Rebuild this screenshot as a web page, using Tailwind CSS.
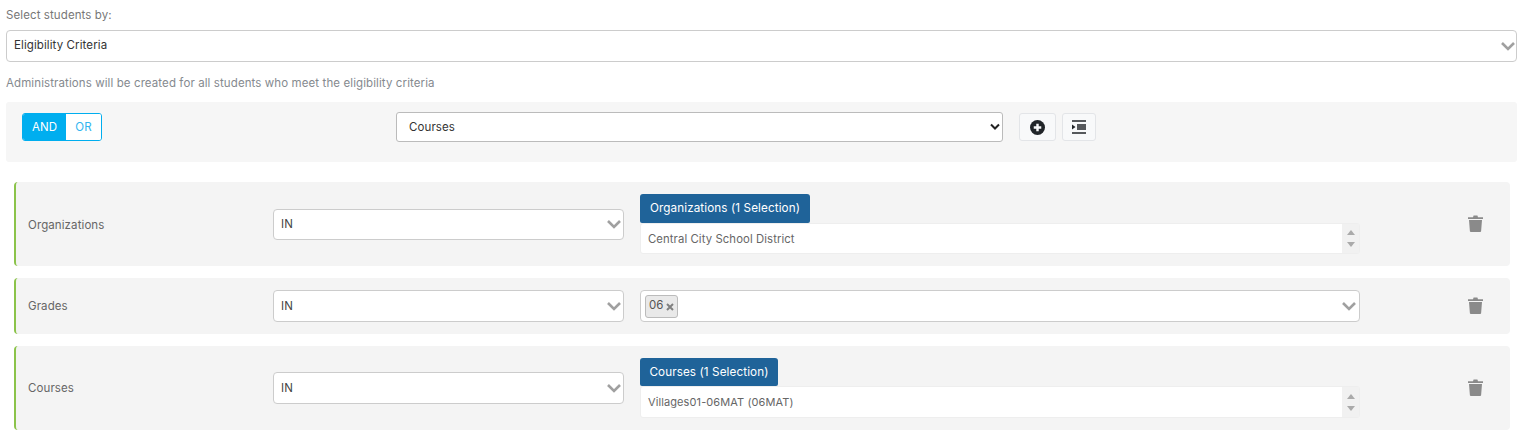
<!DOCTYPE html>
<html lang="en">
<head>
    <meta charset="UTF-8">
    <title>Select students</title>
    <script src="https://cdn.jsdelivr.net/npm/@tailwindcss/browser@4"></script>
</head>
<body class="bg-white font-['Inter',sans-serif] text-[11.5px] tracking-[0.1px] text-[#6c757d] overflow-hidden">
    <div class="pl-[6px] pr-[2px] pt-[9px]">
        <p class="h-[12px] leading-[12px] text-[#777]">Select students by:</p>
        <div class="relative mt-[9px]">
            <select class="appearance-none w-full h-[32px] bg-white border border-[#ccc] rounded-[4px] pl-[7px] text-[#333]">
                <option>Eligibility Criteria</option>
            </select>
            <svg class="absolute right-[1px] top-[11px] w-[16px] h-[10px]" viewBox="0 0 16 10"><path d="M2 2l6 6 6-6" fill="none" stroke="#a0a0a0" stroke-width="2.6"/></svg>
        </div>
        <p class="mt-[15px] h-[12px] leading-[12px] text-[#858a8f]">Administrations will be created for all students who meet the eligibility criteria</p>
        <div class="mt-[13px] h-[60px] bg-[#f6f6f6] rounded-[3px] flex items-start pt-[10px]">
            <div class="ml-[16px] mt-[1px] flex w-[80px] h-[28px] rounded-[3px] border border-[#00aeef] overflow-hidden">
                <span class="w-[43px] pt-[1px] bg-[#00aeef] text-white flex items-center justify-center">AND</span>
                <span class="flex-1 pt-[1px] bg-white text-[#33b5f0] flex items-center justify-center">OR</span>
            </div>
            <div class="relative ml-[294px]">
                <select class="appearance-none w-[607px] h-[30px] pt-[1px] bg-white border border-[#bbb] rounded-[3px] pl-[12px] text-[#333]">
                    <option>Courses</option>
                </select>
                <svg class="absolute right-[3px] top-[11px] w-[10px] h-[8px]" viewBox="0 0 10 8"><path d="M1 1.500l4 4 4-4" fill="none" stroke="#222" stroke-width="2"/></svg>
            </div>
            <button class="ml-[16px] mt-[1px] w-[37px] h-[28px] bg-[#f8f9fa] border border-[#e3e5e8] rounded-[3px] flex items-center justify-center">
                <svg class="w-[15px] h-[15px]" viewBox="0 0 16 16"><circle cx="8" cy="8" r="8" fill="#212529"/><path d="M8 4v8M4 8h8" stroke="#f8f9fa" stroke-width="2.6"/></svg>
            </button>
            <button class="ml-[6px] mt-[1px] w-[34px] h-[28px] bg-[#f8f9fa] border border-[#e3e5e8] rounded-[3px] flex items-center justify-center">
                <svg class="w-[14px] h-[14px]" viewBox="0 0 14 14"><path d="M0 1h14M5 5h9M5 7h9M5 9h9M0 13h14" stroke="#212529" stroke-width="1.600" fill="none"/><path d="M0 4.500L3.500 7 0 9.500z" fill="#212529"/></svg>
            </button>
        </div>

        <div class="mt-[20px] ml-[8px] mr-[7px] flex flex-col gap-[12px]">
            <!-- organizations -->
            <div class="h-[84px] bg-[#f4f4f4] border-l-2 border-[#8bc34a] rounded-[4px] flex items-center pr-[27px]">
                <span class="w-[257px] pl-[12px] pt-[3px] text-[#666]">Organizations</span>
                <div class="relative mt-[1px]">
                    <select class="appearance-none w-[351px] h-[31px] bg-white border border-[#ccc] rounded-[4px] pl-[7px] text-[#444]"><option>IN</option></select>
                    <svg class="absolute right-[2px] top-[10px] w-[16px] h-[10px]" viewBox="0 0 16 10"><path d="M2 2l6 6 6-6" fill="none" stroke="#a0a0a0" stroke-width="2.6"/></svg>
                </div>
                <div class="ml-[16px] w-[720px]">
                    <button class="block h-[29px] w-[170px] bg-[#1f6399] text-white text-[11.7px] rounded-t-[3px] rounded-b-[2px]">Organizations (1 Selection)</button>
                    <div class="h-[31px] bg-white border border-[#eee] rounded-[3px] flex">
                        <span class="flex-1 pl-[7px] pt-[8px] leading-[14px] text-[11.3px] text-[#666]">Central City School District</span>
                        <span class="w-[17px] bg-[#f1f1f1] flex flex-col items-center justify-center gap-[7px]">
                            <span class="w-0 h-0 border-x-[4px] border-x-transparent border-b-[5px] border-b-[#aaa]"></span>
                            <span class="w-0 h-0 border-x-[4px] border-x-transparent border-t-[5px] border-t-[#aaa]"></span>
                        </span>
                    </div>
                </div>
                <svg class="ml-auto w-[15px] h-[17px] -mt-[1px]" viewBox="0 0 15 17"><path d="M0 2.200h5L5.600 .6h3.800L10 2.200h5v1.700H0zM1 5h13l-.9 11.200q-.1.800-1 .8H2.900q-.9 0-1-.8z" fill="#8a8a8a"/></svg>
            </div>
            <!-- grades -->
            <div class="h-[56px] bg-[#f4f4f4] border-l-2 border-[#8bc34a] rounded-[4px] flex items-center pr-[27px]">
                <span class="w-[257px] pl-[12px] pt-[2px] text-[#666]">Grades</span>
                <div class="relative">
                    <select class="appearance-none w-[351px] h-[32px] pt-[1px] bg-white border border-[#ccc] rounded-[4px] pl-[7px] text-[#444]"><option>IN</option></select>
                    <svg class="absolute right-[2px] top-[11px] w-[16px] h-[10px]" viewBox="0 0 16 10"><path d="M2 2l6 6 6-6" fill="none" stroke="#a0a0a0" stroke-width="2.6"/></svg>
                </div>
                <div class="relative ml-[16px] w-[720px] h-[32px] bg-white border border-[#ccc] rounded-[4px] flex items-center pl-[4px]">
                    <span class="h-[23px] w-[33px] bg-[#e9e9e9] border border-[#bbb] rounded-[3px] flex items-center pl-[3px] gap-[2px] text-[#555]">06
                        <svg class="w-[8px] h-[8px] mt-[1px]" viewBox="0 0 8 8"><path d="M1 1l6 6M7 1L1 7" stroke="#808080" stroke-width="2"/></svg>
                    </span>
                    <svg class="absolute right-[2px] top-[10px] w-[16px] h-[10px]" viewBox="0 0 16 10"><path d="M2 2l6 6 6-6" fill="none" stroke="#a0a0a0" stroke-width="2.6"/></svg>
                </div>
                <svg class="ml-auto w-[15px] h-[17px] -mt-[1px]" viewBox="0 0 15 17"><path d="M0 2.200h5L5.600 .6h3.800L10 2.200h5v1.700H0zM1 5h13l-.9 11.200q-.1.800-1 .8H2.900q-.9 0-1-.8z" fill="#8a8a8a"/></svg>
            </div>
            <!-- courses -->
            <div class="h-[84px] bg-[#f4f4f4] border-l-2 border-[#8bc34a] rounded-[4px] flex items-center pr-[27px]">
                <span class="w-[257px] pl-[12px] pt-[2px] text-[#666]">Courses</span>
                <div class="relative">
                    <select class="appearance-none w-[351px] h-[32px] pt-[1px] bg-white border border-[#ccc] rounded-[4px] pl-[7px] text-[#444]"><option>IN</option></select>
                    <svg class="absolute right-[2px] top-[11px] w-[16px] h-[10px]" viewBox="0 0 16 10"><path d="M2 2l6 6 6-6" fill="none" stroke="#a0a0a0" stroke-width="2.6"/></svg>
                </div>
                <div class="ml-[16px] w-[720px]">
                    <button class="block h-[28px] w-[138px] pt-[1px] bg-[#1f6399] text-white text-[11.7px] rounded-t-[3px] rounded-b-[2px]">Courses (1 Selection)</button>
                    <div class="h-[32px] bg-white border border-[#eee] rounded-[3px] flex">
                        <span class="flex-1 pl-[7px] pt-[8px] leading-[14px] text-[11px] text-[#666]">Villages01-06MAT (06MAT)</span>
                        <span class="w-[17px] bg-[#f1f1f1] flex flex-col items-center justify-center gap-[7px]">
                            <span class="w-0 h-0 border-x-[4px] border-x-transparent border-b-[5px] border-b-[#aaa]"></span>
                            <span class="w-0 h-0 border-x-[4px] border-x-transparent border-t-[5px] border-t-[#aaa]"></span>
                        </span>
                    </div>
                </div>
                <svg class="ml-auto w-[15px] h-[17px] -mt-[1px]" viewBox="0 0 15 17"><path d="M0 2.200h5L5.600 .6h3.800L10 2.200h5v1.700H0zM1 5h13l-.9 11.200q-.1.800-1 .8H2.900q-.9 0-1-.8z" fill="#8a8a8a"/></svg>
            </div>
        </div>
    </div>
</body>
</html>
